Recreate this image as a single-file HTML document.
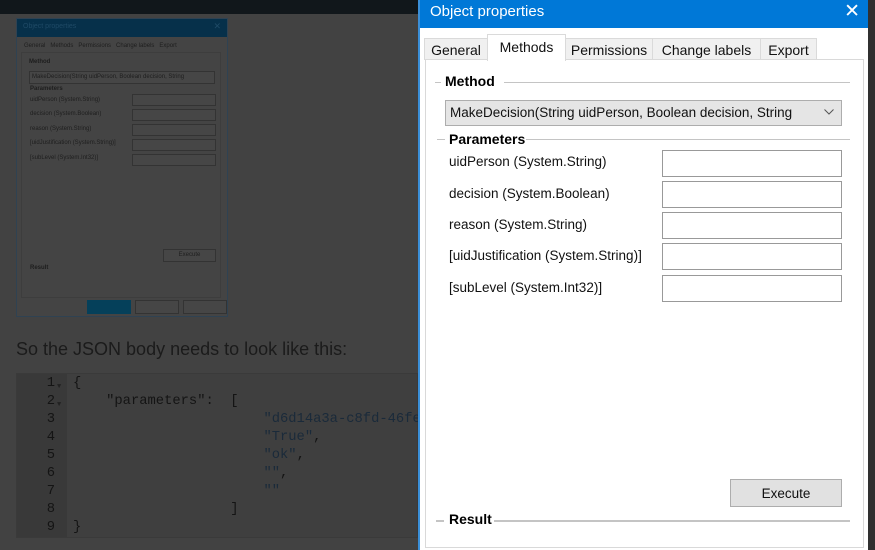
<!DOCTYPE html>
<html><head><meta charset="utf-8"><style>
*{margin:0;padding:0;box-sizing:border-box}
body{width:875px;height:550px;overflow:hidden;background:#424242;position:relative;font-family:"Liberation Sans",sans-serif}
.abs{position:absolute}
.topbar{left:0;top:0;width:875px;height:14px;background:#11171b}
.mini{left:16px;top:18px;width:212px;height:299px;background:#444;border:1px solid #2f4252}
.mini .tb{left:0;top:0;width:210px;height:18px;background:#06304a;color:#1f4a66;font-size:7px;padding:4px 6px}
.mt{font-size:6px;color:#1e1e1e;white-space:nowrap}
.mbox{background:#464646;border:1px solid #333}
.txt{left:16px;top:339px;font-family:"Liberation Sans",sans-serif;font-size:18px;color:#1b1b1b}
.code{left:16px;top:373px;width:402px;height:165px;background:#3f3f3f;border:1px solid #3a3a3a}
.gut{left:0;top:0;width:50px;height:163px;background:#393939}
.ln{font-family:"Liberation Mono",monospace;font-size:13.8px;line-height:18px;color:#141414;white-space:pre}
.dlg{left:418px;top:0;width:450px;height:550px;background:#fff;border-left:2px solid #3a8fd8;overflow:hidden}
.title{left:0;top:0;width:450px;height:28px;background:#0078d7;color:#fff;font-size:15px;padding:3px 10px}
.tab{top:38px;height:22px;border:1px solid #dadada;background:#f0f0f0;font-size:14px;color:#111;padding-top:3px;text-align:center;white-space:nowrap}
.page{left:5px;top:59px;width:439px;height:489px;border:1px solid #d9d9d9;background:#fff}
.lbl{font-size:13.5px;color:#111;white-space:nowrap}
.grp{font-size:14px;font-weight:bold;color:#000;white-space:nowrap}
.line{height:1px;background:#c4c4c4}
.in{width:180px;height:27px;border:1px solid #999;background:#fff}
</style></head><body>
<div class="abs topbar"></div>
<div class="abs mini">
 <div class="abs tb">Object properties<span style="position:absolute;right:6px;top:2px;font-size:9px">✕</span></div>
 <div class="abs mt" style="left:7px;top:24px">General&nbsp;&nbsp; Methods&nbsp;&nbsp; Permissions&nbsp;&nbsp; Change labels&nbsp;&nbsp; Export</div>
 <div class="abs" style="left:4px;top:33px;width:200px;height:246px;border:1px solid #3d3d3d"></div>
 <div class="abs mt" style="left:12px;top:40px;font-weight:bold">Method</div>
 <div class="abs mbox mt" style="left:12px;top:52px;width:186px;height:13px;padding:2px 2px">MakeDecision(String uidPerson, Boolean decision, String</div>
 <div class="abs mt" style="left:13px;top:67px;font-weight:bold">Parameters</div>
 <div class="abs mt" style="left:13px;top:78px">uidPerson (System.String)</div>
 <div class="abs mt" style="left:13px;top:92px">decision (System.Boolean)</div>
 <div class="abs mt" style="left:13px;top:107px">reason (System.String)</div>
 <div class="abs mt" style="left:13px;top:121px">[uidJustification (System.String)]</div>
 <div class="abs mt" style="left:13px;top:136px">[subLevel (System.Int32)]</div>
 <div class="abs mbox" style="left:115px;top:75px;width:84px;height:12px"></div>
 <div class="abs mbox" style="left:115px;top:90px;width:84px;height:12px"></div>
 <div class="abs mbox" style="left:115px;top:105px;width:84px;height:12px"></div>
 <div class="abs mbox" style="left:115px;top:120px;width:84px;height:12px"></div>
 <div class="abs mbox" style="left:115px;top:135px;width:84px;height:12px"></div>
 <div class="abs mbox mt" style="left:146px;top:230px;width:53px;height:13px;text-align:center;padding-top:2px">Execute</div>
 <div class="abs mt" style="left:13px;top:246px;font-weight:bold">Result</div>
 <div class="abs" style="left:70px;top:281px;width:44px;height:14px;background:#05405a"></div>
 <div class="abs mbox" style="left:118px;top:281px;width:44px;height:14px"></div>
 <div class="abs mbox" style="left:166px;top:281px;width:44px;height:14px"></div>
</div>
<div class="abs txt">So the JSON body needs to look like this:</div>
<div class="abs code">
 <div class="abs gut"></div>
 <div class="abs ln" style="left:0;top:1px;width:38px;text-align:right">1
2
3
4
5
6
7
8
9</div>
 <div class="abs ln" style="left:40px;top:4px;font-size:7px;line-height:18px;color:#222">▼
▼</div>
 <div class="abs ln" style="left:56px;top:1px">{
    "parameters":  [
                       <span style="color:#1a2a3a">"d6d14a3a-c8fd-46fe</span>
                       <span style="color:#1a2a3a">"True"</span>,
                       <span style="color:#1a2a3a">"ok"</span>,
                       <span style="color:#1a2a3a">""</span>,
                       <span style="color:#1a2a3a">""</span>
                   ]
}</div>
</div>
<div class="abs" style="left:866px;top:0;width:9px;height:550px;background:#303030"></div>
<div class="abs dlg">
 <div class="abs title">Object properties<span style="position:absolute;right:10px;top:0px;font-size:19px;font-weight:300">✕</span></div>
 <div class="abs page"></div>
 <div class="abs tab" style="left:4px;width:64px">General</div>
 <div class="abs tab" style="left:67px;width:79px;top:34px;height:27px;background:#fff;border-bottom:none;padding-top:4px">Methods</div>
 <div class="abs tab" style="left:145px;width:88px">Permissions</div>
 <div class="abs tab" style="left:232px;width:109px">Change labels</div>
 <div class="abs tab" style="left:340px;width:57px">Export</div>
 <div class="abs line" style="left:15px;top:82px;width:6px"></div>
 <div class="abs grp" style="left:25px;top:73px">Method</div>
 <div class="abs line" style="left:84px;top:82px;width:346px"></div>
 <div class="abs lbl" style="left:25px;top:100px;width:397px;height:26px;background:#e5e5e5;border:1px solid #adadad;padding:4px 4px">MakeDecision(String uidPerson, Boolean decision, String<svg style="position:absolute;right:7px;top:8px" width="10" height="6" viewBox="0 0 10 6"><path d="M0.5 0.5 L5 5 L9.5 0.5" fill="none" stroke="#555" stroke-width="1"/></svg></div>
 <div class="abs line" style="left:17px;top:139px;width:8px"></div>
 <div class="abs grp" style="left:29px;top:131px">Parameters</div>
 <div class="abs line" style="left:106px;top:139px;width:324px"></div>
 <div class="abs lbl" style="left:29px;top:154px">uidPerson (System.String)</div>
 <div class="abs lbl" style="left:29px;top:186px">decision (System.Boolean)</div>
 <div class="abs lbl" style="left:29px;top:217px">reason (System.String)</div>
 <div class="abs lbl" style="left:29px;top:248px">[uidJustification (System.String)]</div>
 <div class="abs lbl" style="left:29px;top:280px">[subLevel (System.Int32)]</div>
 <div class="abs in" style="left:242px;top:150px"></div>
 <div class="abs in" style="left:242px;top:181px"></div>
 <div class="abs in" style="left:242px;top:212px"></div>
 <div class="abs in" style="left:242px;top:243px"></div>
 <div class="abs in" style="left:242px;top:275px"></div>
 <div class="abs lbl" style="left:310px;top:479px;width:112px;height:28px;background:#e1e1e1;border:1px solid #adadad;text-align:center;padding-top:6px">Execute</div>
 <div class="abs line" style="left:16px;top:520px;width:8px;height:2px"></div>
 <div class="abs grp" style="left:29px;top:511px">Result</div>
 <div class="abs line" style="left:74px;top:520px;width:356px;height:2px"></div>
</div>
</body></html>
